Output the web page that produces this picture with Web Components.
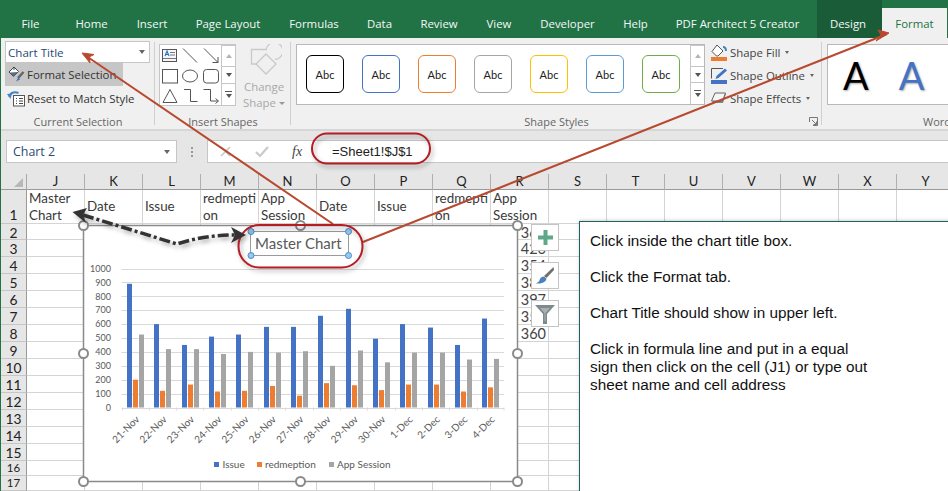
<!DOCTYPE html>
<html>
<head>
<meta charset="utf-8">
<title>Chart title</title>
<style>
  html, body { margin: 0; padding: 0; background: #fff; overflow: hidden; }
</style>
</head>
<body>
<xl-window>
  <xl-tabs></xl-tabs>
  <xl-ribbon>
    <xl-group label="Current Selection" width="154"><xl-selection></xl-selection></xl-group>
    <xl-group label="Insert Shapes" width="136"><xl-shapes></xl-shapes></xl-group>
    <xl-group label="Shape Styles" width="531" launcher><xl-styles></xl-styles></xl-group>
    <xl-group label="WordArt Styles" width="278"><xl-wordart></xl-wordart></xl-group>
  </xl-ribbon>
  <xl-formula-bar name="Chart 2" formula="=Sheet1!$J$1"></xl-formula-bar>
  <xl-sheet></xl-sheet>
  <xl-chart></xl-chart>
  <xl-chart-tools></xl-chart-tools>
  <xl-note>
    <p>Click inside the chart title box.</p>
    <p>Click the Format tab.</p>
    <p>Chart Title should show in upper left.</p>
    <p>Click in formula line and put in a equal<br>sign then click on the cell (J1) or type out<br>sheet name and cell address</p>
  </xl-note>
  <xl-marks></xl-marks>
</xl-window>

<script>
const UI_FONT = `"Open Sans", "Noto Sans", sans-serif`;
const CELL_FONT = `Lato, "Open Sans", sans-serif`;

class XlWindow extends HTMLElement {
  constructor() {
    super();
    this.attachShadow({ mode: 'open' });
    this.shadowRoot.innerHTML = `
      <style>
        :host {
          display: flex;
          flex-direction: column;
          position: relative;
          width: 948px;
          height: 491px;
          overflow: hidden;
          box-sizing: border-box;
          border-left: 1px solid #217346;
          background: #fff;
          color: #333;
        }
      </style>
      <slot></slot>`;
  }
}

class XlTabs extends HTMLElement {
  constructor() {
    super();
    this.attachShadow({ mode: 'open' });
    // width of each tab, the text sits centred in it
    const tabs = [
      ['File', 59], ['Home', 63], ['Insert', 58], ['Page Layout', 94], ['Formulas', 78],
      ['Data', 53], ['Review', 66], ['View', 54], ['Developer', 83], ['Help', 53],
      ['PDF Architect 5 Creator', 151]
    ];
    this.shadowRoot.innerHTML = `
      <style>
        :host {
          display: flex;
          flex: none;
          height: 38px;
          background: #217346;
          color: #f4f8f6;
          font: 11.4px ${UI_FONT};
        }
        div { display: flex; align-items: center; justify-content: center; padding-top: 8px; box-sizing: border-box; flex: none; }
        .spacer { width: 4px; padding: 0; }
        .context { display: flex; background: #1a5c38; width: 65px; padding-right: 3px; }
        .active { width: 65px; background: #f0f0f0; color: #217346; margin-top: 8px; padding-top: 0; }
      </style>
      ${tabs.map(([t, w]) => `<div style="width:${w}px">${t}</div>`).join('')}
      <div class="spacer"></div>
      <div class="context">Design</div>
      <div class="active">Format</div>`;
  }
}

class XlRibbon extends HTMLElement {
  constructor() {
    super();
    this.attachShadow({ mode: 'open' });
    this.shadowRoot.innerHTML = `
      <style>
        :host {
          display: flex;
          flex: none;
          height: 93px;
          box-sizing: border-box;
          background: #f0f0f0;
          border-bottom: 2px solid #d6d6d6;
          overflow: hidden;
          font: 11.4px ${UI_FONT};
          color: #444;
        }
      </style>
      <slot></slot>`;
  }
}

class XlGroup extends HTMLElement {
  constructor() {
    super();
    this.attachShadow({ mode: 'open' });
    this.shadowRoot.innerHTML = `
      <style>
        :host {
          display: flex;
          flex: none;
          flex-direction: column;
          position: relative;
          box-sizing: border-box;
          height: 91px;
        }
        .body { flex: 1; min-height: 0; }
        .label { height: 14px; line-height: 14px; text-align: center; color: #666; font-size: 11px; }
        .sep { position: absolute; right: 0; top: 4px; bottom: 4px; width: 1px; background: #d0d0d0; }
        svg { position: absolute; right: 4px; bottom: 3px; }
      </style>
      <div class="body"><slot></slot></div>
      <div class="label"></div>
      <div class="sep"></div>`;
  }

  connectedCallback() {
    this.style.width = this.getAttribute('width') + 'px';
    this.shadowRoot.querySelector('.label').textContent = this.getAttribute('label');
    if (this.hasAttribute('launcher')) {
      this.shadowRoot.querySelector('.sep').insertAdjacentHTML('afterend',
        `<svg width="9" height="9" viewBox="0 0 9 9" fill="none" stroke="#777">
          <path d="M.5 5V.5H8.5V8.5H4"/><path d="M3 3 7.5 7.5M7.5 4.5V7.5H4.5"/></svg>`);
    }
  }
}

class XlSelection extends HTMLElement {
  constructor() {
    super();
    this.attachShadow({ mode: 'open' });
    this.shadowRoot.innerHTML = `
      <style>
        :host { display: block; padding: 3px 0 0 4px; }
        .combo {
          display: flex; align-items: center; justify-content: space-between;
          width: 145px; height: 22px; box-sizing: border-box;
          background: #fff; border: 1px solid #c6c6c6; padding: 0 4px 0 2px;
          color: #2a4a73; font-size: 11.6px;
        }
        .arrow { width: 0; height: 0; border: 3px solid transparent; border-top: 4px solid #666; border-bottom: 0; }
        .btn { display: flex; align-items: center; gap: 2px; width: 118px; height: 23px; padding-left: 2px; box-sizing: border-box; white-space: nowrap; color: #333; }
        .on { background: #c6c6c6; }
        .reset { padding-top: 1px; }
        svg { flex: none; }
      </style>
      <div class="combo"><span>Chart Title</span><span class="arrow"></span></div>
      <div class="btn on">
        <svg width="18" height="18" viewBox="0 0 18 18">
          <path d="M7 1 11.5 5.500 6.500 10.500 2 6z" fill="#fff" stroke="#444"/>
          <path d="M3 6.500 11 6 6.500 10.500z" fill="#5b6f86"/>
          <path d="M7 1.500V4" stroke="#444"/>
          <path d="M16.500 6 11 12" stroke="#666" stroke-width="2.500"/>
          <path d="M11.500 11 9 15.500 13 13.500z" fill="#3f74c0"/>
        </svg>
        <span>Format Selection</span>
      </div>
      <div class="btn reset">
        <svg width="18" height="18" viewBox="0 0 18 18">
          <rect x="6.500" y="6.500" width="11" height="10.500" fill="#fff" stroke="#555"/>
          <path d="M9 9.500h1M12 9.500h4M9 12h1M12 12h4M9 14.500h1M12 14.500h4" stroke="#444"/>
          <path d="M2.500 8C3 4 7 2 11.500 4" fill="none" stroke="#3f86c8" stroke-width="2"/>
          <path d="M0 5 5 4.500 3.500 10z" fill="#3f86c8"/>
        </svg>
        <span>Reset to Match Style</span>
      </div>`;
  }
}

class XlScroll extends HTMLElement {
  constructor() {
    super();
    this.attachShadow({ mode: 'open' });
    this.shadowRoot.innerHTML = `
      <style>
        :host { display: flex; flex-direction: column; flex: none; width: 14px; box-sizing: border-box; border-left: 1px solid #c6c6c6; }
        div { display: flex; align-items: center; justify-content: center; flex-direction: column; gap: 2px; background: #fff; border-top: 1px solid #c6c6c6; box-sizing: border-box; }
        div:first-child { border-top: 0; background: #dcdcdc; }
        .up { width: 0; height: 0; border: 3.500px solid transparent; border-bottom: 4px solid #b4b4b4; border-top: 0; }
        .dn { width: 0; height: 0; border: 3.500px solid transparent; border-top: 4px solid #555; border-bottom: 0; }
        .bar { width: 7px; height: 1px; background: #555; }
      </style>
      <div style="height:21px"><span class="up"></span></div>
      <div style="flex:1"><span class="dn"></span></div>
      <div style="height:22px"><span class="bar"></span><span class="dn"></span></div>`;
  }
}

class XlShapes extends HTMLElement {
  constructor() {
    super();
    this.attachShadow({ mode: 'open' });
    this.shadowRoot.innerHTML = `
      <style>
        :host { display: flex; padding: 6px 0 0 4px; gap: 8px; }
        .gallery { display: flex; width: 77px; height: 62px; box-sizing: border-box; background: #fff; border: 1px solid #c6c6c6; }
        .cells { flex: 1; }
        .change { display: flex; flex-direction: column; align-items: center; width: 40px; color: #a8a8a8; line-height: 16px; font-size: 11.4px; }
        .change svg { margin-bottom: 4px; margin-left: 3px; }
        .shape { display: flex; align-items: center; gap: 3px; white-space: nowrap; }
        .shape i { flex: none; width: 0; height: 0; border: 3px solid transparent; border-top: 3px solid #999; border-bottom: 0; }
      </style>
      <div class="gallery">
        <svg class="cells" width="61" height="60" viewBox="0 0 61 60" fill="none" stroke="#555">
          <rect x="2.500" y="4.500" width="14" height="12" fill="#f4f6fb"/>
          <path d="M3 13.500h13M10 7.500h5M10 10h5" stroke="#777"/>
          <path d="M5 11 7 6 9 11M5.800 9.500h2.400" stroke="#2b6fc0" stroke-width="1.100"/>
          <path d="M23 3.500 37 17.500"/>
          <path d="M44 3.500 58 17.500M58 12V17.500H52.500"/>
          <rect x="2.500" y="24.500" width="15" height="13.500"/>
          <ellipse cx="30" cy="31" rx="7.500" ry="6"/>
          <rect x="43.500" y="24.500" width="15" height="13.500" rx="3"/>
          <path d="M10 44.500 3 57.500H17z"/>
          <path d="M24 44.500H30.500V56.500H37.500"/>
          <path d="M43.500 44.500H50.500V56H58M55.500 53.500 58.500 56 55.500 58.500"/>
        </svg>
        <xl-scroll></xl-scroll>
      </div>
      <div class="change">
        <svg width="32" height="31" viewBox="0 0 32 31" fill="none" stroke="#c9c9c9" stroke-width="1.300">
          <path d="M17 5.500H1.500V20H7"/>
          <path d="M16 5.500a8.500 8.500 0 1 1 9 10"/>
          <path d="M16 10 26 20 16 30 6 20z" fill="#f0f0f0"/>
        </svg>
        <span>Change</span>
        <span class="shape"><span>Shape</span><i></i></span>
      </div>`;
  }
}

class XlStyles extends HTMLElement {
  constructor() {
    super();
    this.attachShadow({ mode: 'open' });
    const colors = ['#000', '#4472c4', '#ed7d31', '#a5a5a5', '#ffc000', '#5b9bd5', '#70ad47'];
    this.shadowRoot.innerHTML = `
      <style>
        :host { display: flex; padding: 6px 0 0 5px; gap: 5px; }
        .gallery { display: flex; width: 409px; height: 61px; box-sizing: border-box; background: #fff; border: 1px solid #b8b8b8; }
        .cells { flex: 1; display: flex; gap: 18px; padding: 10px 0 0 9px; }
        .abc {
          width: 38px; height: 38px; box-sizing: border-box; border: 1px solid; border-radius: 6px;
          display: flex; align-items: center; justify-content: center;
          font: 11px ${CELL_FONT}; color: #222;
        }
        .cmds { display: flex; flex-direction: column; color: #444; margin-top: -3px; }
        .cmd { display: flex; align-items: center; gap: 2px; height: 23px; white-space: nowrap; }
        .cmd i { display: inline-block; width: 0; height: 0; border: 2.500px solid transparent; border-top: 3px solid #666; border-bottom: 0; margin-left: 3px; }
      </style>
      <div class="gallery">
        <div class="cells">${colors.map(c => `<div class="abc" style="border-color:${c}">Abc</div>`).join('')}</div>
        <xl-scroll></xl-scroll>
      </div>
      <div class="cmds">
        <div class="cmd">
          <svg width="18" height="18" viewBox="0 0 18 18">
            <path d="M7 1 13 7 8 12H6.500L2 7.500z" fill="#fff" stroke="#555"/>
            <path d="M13 3c2.500 0 3 2 3 4" fill="none" stroke="#3f86c8" stroke-width="2"/>
            <rect x="1" y="13" width="16" height="4" fill="#ed7d31"/>
          </svg><span>Shape Fill</span><i></i>
        </div>
        <div class="cmd">
          <svg width="18" height="18" viewBox="0 0 18 18">
            <path d="M13 1.500H1.500V11.500" fill="none" stroke="#555"/>
            <path d="M15 1.500 17 3.500 8.500 11 5.500 12 6.500 9z" fill="#3f74c0"/>
            <rect x="1" y="13" width="16" height="4" fill="#4472c4"/>
          </svg><span>Shape Outline</span><i></i>
        </div>
        <div class="cmd">
          <svg width="18" height="18" viewBox="0 0 18 18">
            <path d="M5.500 4H16L13 13H2z" fill="#888"/>
            <path d="M5 3H15.500L12.500 11H1.500z" fill="#f5f5f5" stroke="#666"/>
          </svg><span>Shape Effects</span><i></i>
        </div>
      </div>`;
  }
}

class XlWordart extends HTMLElement {
  constructor() {
    super();
    this.attachShadow({ mode: 'open' });
    this.shadowRoot.innerHTML = `
      <style>
        :host { display: block; padding: 6px 0 0 5px; }
        .gallery { display: flex; gap: 30px; width: 260px; height: 61px; padding-left: 15px; box-sizing: border-box; background: #fff; border: 1px solid #b8b8b8; }
        span { font: 38px/60px ${CELL_FONT}; text-shadow: 1px 1px 2px rgba(0,0,0,.35); }
      </style>
      <div class="gallery"><span style="color:#000">A</span><span style="color:#4472c4">A</span></div>`;
  }
}

class XlFormulaBar extends HTMLElement {
  constructor() {
    super();
    this.attachShadow({ mode: 'open' });
    this.shadowRoot.innerHTML = `
      <style>
        :host {
          display: flex;
          flex: none;
          height: 43px;
          box-sizing: border-box;
          padding: 9px 0 0 5px;
          background: #e6e6e6;
          font: 12.4px ${UI_FONT};
        }
        .box { display: flex; align-items: center; height: 23px; box-sizing: border-box; background: #fff; border: 1px solid #c6c6c6; }
        .name { justify-content: space-between; width: 171px; padding: 0 6px 0 6px; color: #2a4a73; }
        .arrow { width: 0; height: 0; border: 3.500px solid transparent; border-top: 4px solid #666; border-bottom: 0; }
        .dots { display: flex; flex-direction: column; gap: 2px; align-items: center; justify-content: center; width: 30px; height: 23px; }
        .dots i { width: 2px; height: 2px; background: #9a9a9a; }
        .formula { flex: 1; min-width: 0; border-right: 0; }
        .fx { display: flex; align-items: center; width: 105px; flex: none; padding-left: 11px; box-sizing: border-box; gap: 23px; }
        .f { font: italic 14px "Liberation Serif", serif; color: #444; }
        .val { padding-left: 19px; font: 13px "Liberation Sans", sans-serif; color: #222; }
      </style>
      <div class="box name"><span id="name"></span><span class="arrow"></span></div>
      <div class="dots"><i></i><i></i><i></i></div>
      <div class="box formula">
        <div class="fx">
          <svg width="13" height="13" viewBox="0 0 13 13" stroke="#c9c9c9" stroke-width="1.600"><path d="M2 2 11 11M11 2 2 11"/></svg>
          <svg width="14" height="13" viewBox="0 0 14 13" fill="none" stroke="#c9c9c9" stroke-width="2.200"><path d="M1 7 5 11 13 2"/></svg>
          <span class="f">fx</span>
        </div>
        <span class="val" id="val"></span>
      </div>`;
  }

  connectedCallback() {
    this.shadowRoot.getElementById('name').textContent = this.getAttribute('name');
    this.shadowRoot.getElementById('val').textContent = this.getAttribute('formula');
  }
}

class XlSheet extends HTMLElement {
  constructor() {
    super();
    this.attachShadow({ mode: 'open' });
    const cols = 'JKLMNOPQRSTUVWXY'.split('');
    const heights = [34, 16, 17, 17, 17, 17, 17, 17, 17, 17, 17, 17, 17, 17, 17, 15, 15];
    const head = ['Master<br>Chart', 'Date', 'Issue', 'redmepti<br>on', 'App<br>Session', 'Date', 'Issue', 'redmepti<br>on', 'App<br>Session'];
    const nums = ['362', '426', '354', '385', '397', '358', '360'];

    let cells = `<div class="corner"><svg width="9" height="9"><path d="M9 0V9H0z" fill="#b8b8b8"/></svg></div>`;
    cols.forEach(c => { cells += `<div class="col">${c}</div>`; });
    heights.forEach((h, r) => {
      const cls = r === 0 ? ' first' : r >= 15 ? ' low' : '';
      cells += `<div class="row${cls}">${r + 1}</div>`;
      cols.forEach((c, i) => {
        let text = '';
        if (r === 0 && head[i]) text = head[i];
        // the numbers of column R, rows 2 to 8, stick out from under the chart
        if (c === 'R' && r >= 1 && r <= 7) text = `<span class="num">${nums[r - 1]}</span>`;
        cells += `<div class="cell">${text}</div>`;
      });
    });

    this.shadowRoot.innerHTML = `
      <style>
        :host {
          display: grid;
          flex: none;
          grid-template-columns: 26px repeat(16, 58px);
          grid-template-rows: 16px ${heights.map(h => h + 'px').join(' ')};
          font: 13.4px/17px ${CELL_FONT};
          color: #3a3a3a;
          background: #fff;
        }
        div { box-sizing: border-box; overflow: hidden; white-space: nowrap; }
        .corner { display: flex; align-items: flex-end; justify-content: flex-end; padding: 0 3px 2px 0; background: #e6e6e6; border-right: 1px solid #a8a8a8; border-bottom: 1px solid #9a9a9a; }
        .col { display: flex; align-items: center; justify-content: center; background: #e6e6e6; border-right: 1px solid #b0b0b0; border-bottom: 1px solid #9a9a9a; color: #222; font-size: 13px; }
        .row { display: flex; align-items: center; justify-content: center; padding-top: 2px; line-height: 14px; background: #e6e6e6; border-right: 1px solid #9a9a9a; border-bottom: 1px solid #c6c6c6; color: #222; font-size: 13.8px; }
        .row.first { align-items: flex-end; padding-top: 0; line-height: 17px; }
        .row.low { padding-top: 0; font-size: 11.5px; line-height: 14px; }
        .cell { display: flex; flex-direction: column; justify-content: center; padding-left: 2px; border-right: 1px solid #d4d4d4; border-bottom: 1px solid #d4d4d4; }
        .num { align-self: flex-end; padding: 1px 2px 0 0; font-size: 14.5px; color: #444; }
      </style>
      ${cells}`;
  }
}

class XlChart extends HTMLElement {
  constructor() {
    super();
    this.attachShadow({ mode: 'open' });
    const days = ['21-Nov', '22-Nov', '23-Nov', '24-Nov', '25-Nov', '26-Nov', '27-Nov', '28-Nov', '29-Nov', '30-Nov', '1-Dec', '2-Dec', '3-Dec', '4-Dec'];
    const issue = [890, 600, 450, 510, 525, 580, 580, 660, 710, 495, 600, 575, 450, 640];
    const redeem = [200, 120, 165, 115, 120, 155, 85, 175, 160, 125, 165, 165, 115, 145];
    const app = [525, 420, 420, 385, 400, 395, 405, 300, 410, 325, 395, 395, 345, 350];

    const left = 121.5, right = 504, top = 268.5, bottom = 407.5;
    const catW = (right - left) / 14;
    const y = v => bottom - v * (bottom - top) / 1000;

    let grid = '', bars = '', ticks = '', names = '';
    for (let v = 0; v <= 1000; v += 100) {
      const yy = Math.round(y(v)) + .5;
      grid += `<path d="M${left} ${yy}H${right}" stroke="#d9d9d9"/>`;
      grid += `<text x="111" y="${y(v) + 3.2}" text-anchor="end" class="t">${v}</text>`;
    }
    days.forEach((d, i) => {
      const x0 = Math.round(left + i * catW + 5.5);
      [[issue, '#4472c4', 0], [redeem, '#ed7d31', 6], [app, '#a5a5a5', 12]].forEach(([vals, col, dx]) => {
        const h = vals[i] * (bottom - top) / 1000;
        bars += `<rect x="${x0 + dx}" y="${bottom - h}" width="5" height="${h}" fill="${col}"/>`;
      });
      const tx = Math.round(left + i * catW) + .5;
      ticks += `<path d="M${tx} ${bottom}v3" stroke="#d9d9d9"/>`;
      const cx = left + (i + .5) * catW;
      names += `<text x="${cx + 5}" y="420" text-anchor="end" class="d" transform="rotate(-45 ${cx + 5} 420)">${d}</text>`;
    });
    ticks += `<path d="M${right} ${bottom}v3" stroke="#d9d9d9"/>`;

    const handles = [[83.5, 225.5], [300.5, 225.5], [517.5, 225.5], [83.5, 353.5], [517.5, 353.5], [83.5, 481.5], [300.5, 481.5], [517.5, 481.5]]
      .map(([a, b]) => `<circle cx="${a}" cy="${b}" r="4.500" fill="#fff" stroke="#8a8a8a" stroke-width="2"/>`).join('');
    const blue = [[251, 231.5], [348.5, 231.5], [251, 255.5], [348.5, 255.5]]
      .map(([a, b]) => `<circle cx="${a}" cy="${b}" r="3" fill="#9cc8ea" stroke="#3f8fd0" stroke-width="1"/>`).join('');

    this.shadowRoot.innerHTML = `
      <style>
        :host { position: absolute; left: -1px; top: 0; width: 948px; height: 491px; display: block; pointer-events: none; }
        svg { display: block; }
        .t { font: 9px ${CELL_FONT}; fill: #595959; }
        .d { font: 10px ${CELL_FONT}; fill: #595959; }
        .lg { font: 10px ${CELL_FONT}; fill: #595959; }
        .title { font: 15px ${CELL_FONT}; fill: #595959; }
      </style>
      <svg width="948" height="491" viewBox="0 0 948 491">
        <rect x="83.500" y="225.500" width="434" height="256" fill="#fff" stroke="#8a8a8a" stroke-width="1.500"/>
        ${grid}${ticks}${bars}${names}
        <rect x="214" y="462" width="5" height="5" fill="#4472c4"/>
        <text x="222.500" y="467.500" class="lg">Issue</text>
        <rect x="257" y="462" width="5" height="5" fill="#ed7d31"/>
        <text x="265" y="467.500" class="lg">redmeption</text>
        <rect x="329" y="462" width="5" height="5" fill="#a5a5a5"/>
        <text x="337" y="467.500" class="lg">App Session</text>
        <rect x="250.500" y="231.500" width="98" height="24" fill="#fff" stroke="#9a9a9a"/>
        <text x="255" y="249" class="title">Master Chart</text>
        ${blue}${handles}
      </svg>`;
  }
}

class XlChartTools extends HTMLElement {
  constructor() {
    super();
    this.attachShadow({ mode: 'open' });
    this.shadowRoot.innerHTML = `
      <style>
        :host { position: absolute; left: 530px; top: 224px; display: flex; flex-direction: column; gap: 11px; }
        div { width: 28px; height: 27px; box-sizing: border-box; background: #fff; border: 1px solid #c4c4c4; display: flex; align-items: center; justify-content: center; }
      </style>
      <div><svg width="15" height="15" viewBox="0 0 15 15"><path d="M5.500 0h4v5.500H15v4H9.500V15h-4V9.500H0v-4h5.500z" fill="#5fa78a"/></svg></div>
      <div><svg width="20" height="20" viewBox="0 0 20 20">
        <path d="M18.500 1 19 4 11.500 12 9 10z" fill="#6f6f6f"/>
        <path d="M9 10.500 11.500 12.800C11 16 7 18 1 17.500 3.500 16 4.500 15 5 13 5.500 11.500 7 10.500 9 10.500z" fill="#4a7fc0"/>
      </svg></div>
      <div><svg width="20" height="20" viewBox="0 0 20 20">
        <path d="M0 1H20L12 10V20H8V10z" fill="#7f8a8c"/>
        <path d="M5 4H15L10.500 9V17H9.500V9z" fill="#a9b1b3"/>
      </svg></div>`;
  }
}

class XlNote extends HTMLElement {
  constructor() {
    super();
    this.attachShadow({ mode: 'open' });
    this.shadowRoot.innerHTML = `
      <style>
        :host {
          position: absolute;
          left: 578px;
          top: 221px;
          width: 380px;
          height: 280px;
          box-sizing: border-box;
          padding: 10px 10px;
          background: #fff;
          border: 1px solid #1f5f66;
          box-shadow: 0 -1px 3px rgba(0,0,0,.18);
          font: 15.3px/18px "Liberation Sans", sans-serif;
          color: #111;
        }
        ::slotted(p) { margin: 0 0 18px; }
      </style>
      <slot></slot>`;
  }
}

class XlMarks extends HTMLElement {
  constructor() {
    super();
    this.attachShadow({ mode: 'open' });
    this.shadowRoot.innerHTML = `
      <style>
        :host { position: absolute; left: -1px; top: 0; width: 948px; height: 491px; display: block; pointer-events: none; }
        .s { filter: drop-shadow(2px 3px 2px rgba(0,0,0,.3)); }
      </style>
      <svg width="948" height="491" viewBox="0 0 948 491" fill="none">
        <g stroke="#b8492f" stroke-width="2">
          <path d="M84 54.500 333 224"/>
          <path d="M363 242 887 34"/>
        </g>
        <g fill="#b8492f" stroke="#b8492f" stroke-linejoin="round">
          <path d="M82 53 94 54.500 89.500 56.800 90 63z" />
          <path d="M889 33 878 30 881 35 876 41z" />
        </g>
        <g class="s">
          <rect x="238.500" y="225" width="124" height="42.500" rx="21" stroke="#b51c24" stroke-width="2"/>
          <rect x="312" y="133.500" width="118" height="30" rx="15" stroke="#b51c24" stroke-width="2"/>
          <path d="M83 215 177 244C195 238 215 235 235 235" stroke="#333" stroke-width="3.500" stroke-dasharray="11 3 3 3"/>
          <path d="M72.500 212 87 208 83 215 86 223z" fill="#333"/>
          <path d="M246 235 231 227 235 235 231 243z" fill="#333"/>
        </g>
      </svg>`;
  }
}

customElements.define('xl-window', XlWindow);
customElements.define('xl-tabs', XlTabs);
customElements.define('xl-ribbon', XlRibbon);
customElements.define('xl-group', XlGroup);
customElements.define('xl-selection', XlSelection);
customElements.define('xl-scroll', XlScroll);
customElements.define('xl-shapes', XlShapes);
customElements.define('xl-styles', XlStyles);
customElements.define('xl-wordart', XlWordart);
customElements.define('xl-formula-bar', XlFormulaBar);
customElements.define('xl-sheet', XlSheet);
customElements.define('xl-chart', XlChart);
customElements.define('xl-chart-tools', XlChartTools);
customElements.define('xl-note', XlNote);
customElements.define('xl-marks', XlMarks);
</script>
</body>
</html>
